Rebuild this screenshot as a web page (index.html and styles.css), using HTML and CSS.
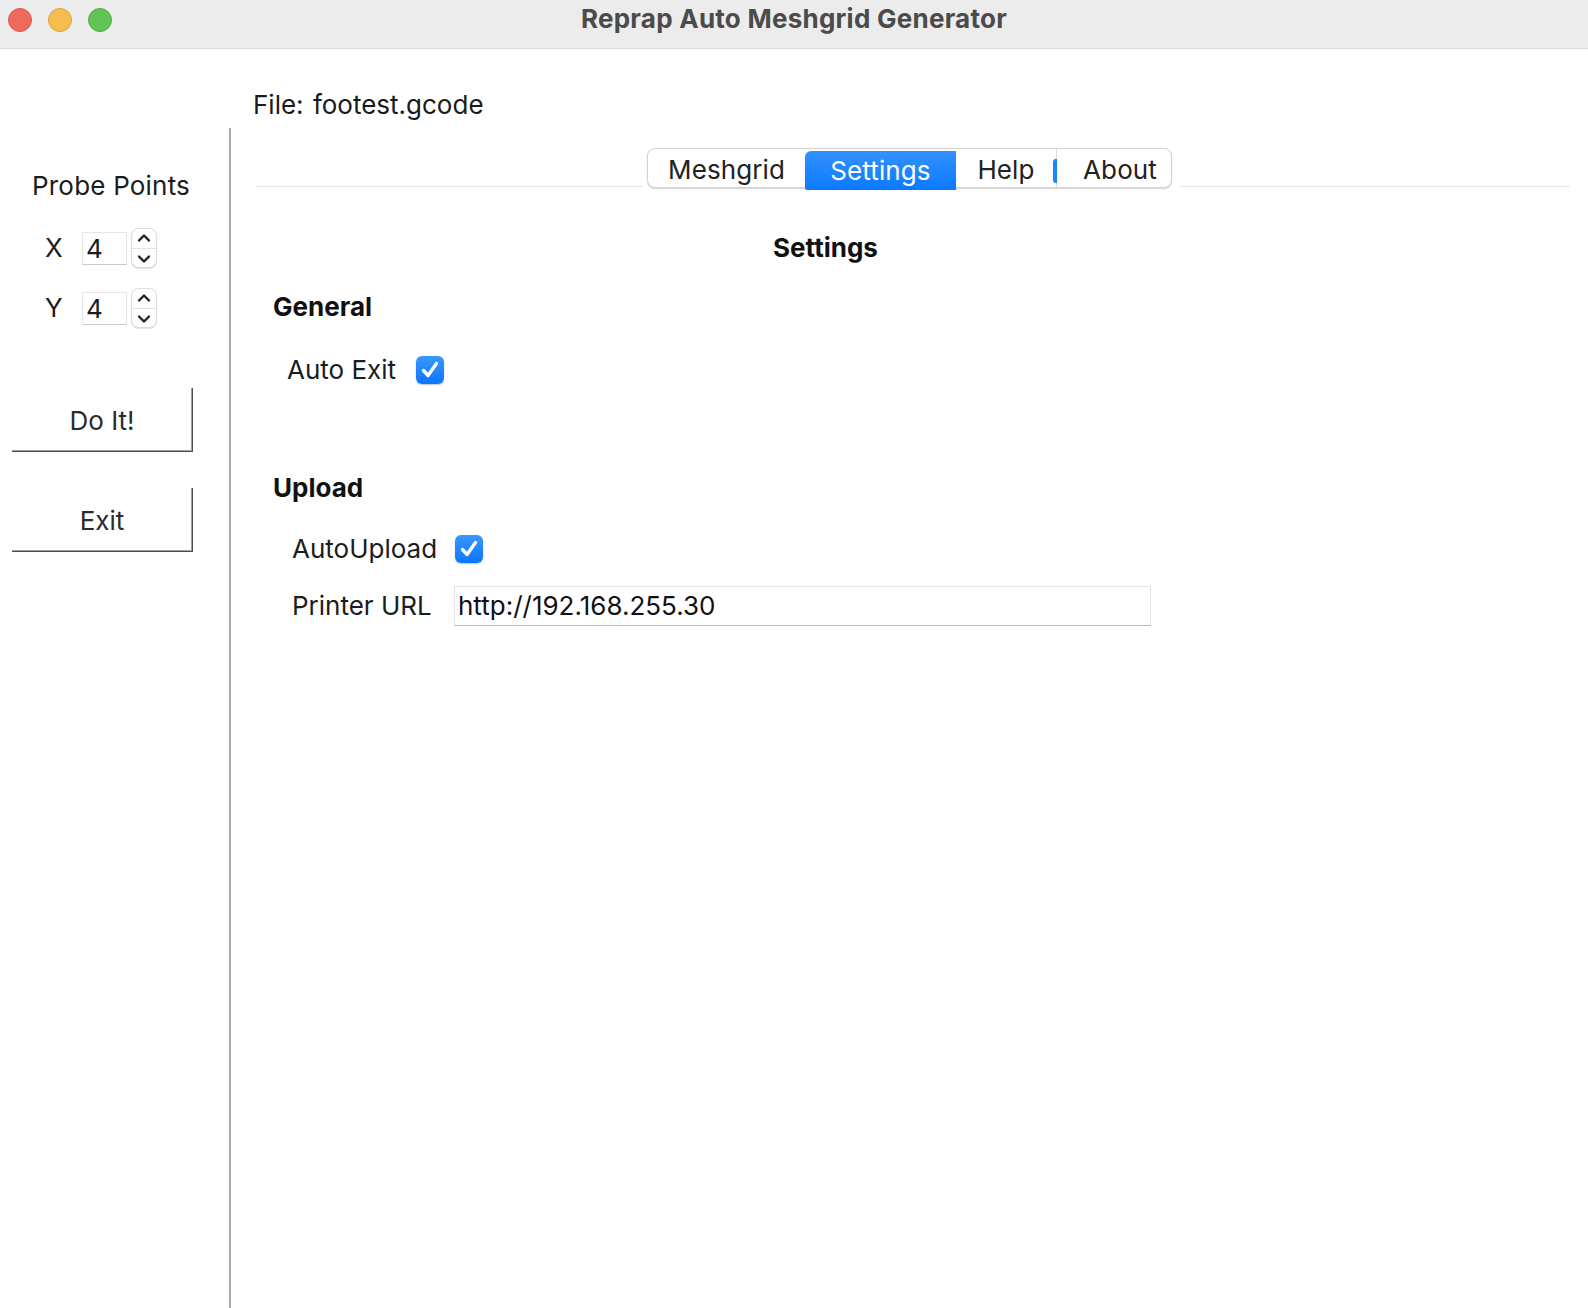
FILE: index.html
```html
<!DOCTYPE html>
<html lang="en">
<head>
<meta charset="utf-8">
<title>Reprap Auto Meshgrid Generator</title>
<link rel="stylesheet" href="styles.css">
</head>
<body>
<div class="window">
  <header class="titlebar">
    <div class="lights">
      <span class="light red"></span>
      <span class="light yellow"></span>
      <span class="light green"></span>
    </div>
    <div class="title">Reprap Auto Meshgrid Generator</div>
    <div></div>
  </header>

  <div class="layout">
    <div class="file-label">File: footest.gcode</div>

    <aside class="side">
      <div class="side-title">Probe Points</div>
      <div class="spin-row">
        <span class="axis">X</span>
        <div class="spin-entry">4</div>
        <div class="spinner">
          <svg class="chev" width="16" height="12" viewBox="0 0 16 12"><path d="M3 8.5 L8 3.5 L13 8.5"/></svg>
          <span class="spin-div"></span>
          <svg class="chev" width="16" height="12" viewBox="0 0 16 12"><path d="M3 3.5 L8 8.5 L13 3.5"/></svg>
        </div>
      </div>
      <div class="spin-row second">
        <span class="axis">Y</span>
        <div class="spin-entry">4</div>
        <div class="spinner">
          <svg class="chev" width="16" height="12" viewBox="0 0 16 12"><path d="M3 8.5 L8 3.5 L13 8.5"/></svg>
          <span class="spin-div"></span>
          <svg class="chev" width="16" height="12" viewBox="0 0 16 12"><path d="M3 3.5 L8 8.5 L13 3.5"/></svg>
        </div>
      </div>
      <button class="btn do-it">Do It!</button>
      <button class="btn exit">Exit</button>
    </aside>

    <section class="content">
      <div class="tabbar">
        <span class="tabline left"></span>
        <div class="tabs">
          <div class="tab t-mesh">Meshgrid</div>
          <div class="tab t-settings active">Settings</div>
          <div class="tab t-help">Help</div>
          <div class="tab t-about">About</div>
        </div>
        <span class="tabline right"></span>
      </div>

      <div class="page">
        <h1 class="page-title">Settings</h1>

        <h2 class="section">General</h2>
        <div class="check-row">
          <span class="check-label">Auto Exit</span>
          <span class="checkbox"><svg width="28" height="28" viewBox="0 0 28 28"><path d="M7.5 14.5 L12 19.5 L20.5 7.5"/></svg></span>
        </div>

        <h2 class="section upload">Upload</h2>
        <div class="form-grid">
          <span class="form-label">AutoUpload</span>
          <span class="checkbox"><svg width="28" height="28" viewBox="0 0 28 28"><path d="M7.5 14.5 L12 19.5 L20.5 7.5"/></svg></span>
          <span class="form-label">Printer URL</span>
          <div class="text-entry">http://192.168.255.30</div>
        </div>
      </div>
    </section>
  </div>
</div>
</body>
</html>
```

FILE: styles.css
```css
* { box-sizing: border-box; }

html, body {
  margin: 0;
  padding: 0;
  background: #ffffff;
}

body {
  width: 1588px;
  height: 1308px;
  overflow: hidden;
  font-family: "Inter", "Helvetica Neue", "Liberation Sans", sans-serif;
  font-size: 26px;
  line-height: 32px;
  color: #1c1c1c;
}

.window {
  display: flex;
  flex-direction: column;
  height: 1308px;
}

/* ---------- title bar ---------- */
.titlebar {
  height: 49px;
  flex: none;
  background: #ececec;
  border-bottom: 1px solid #d9d9d9;
  display: grid;
  grid-template-columns: 1fr auto 1fr;
  align-items: start;
}

.lights {
  display: flex;
  gap: 16px;
  padding: 8px 0 0 8px;
}

.light {
  width: 24px;
  height: 24px;
  border-radius: 50%;
  display: block;
}
.light.red { background: #ee6a5f; border: 1px solid #d85a4f; }
.light.yellow { background: #f5bf4f; border: 1px solid #dca53e; }
.light.green { background: #61c555; border: 1px solid #50aa45; }

.title {
  padding-top: 3px;
  font-weight: 700;
  font-size: 26px;
  letter-spacing: 0.25px;
  color: #4b4b4b;
}

/* ---------- layout ---------- */
.layout {
  flex: 1;
  display: grid;
  grid-template-columns: 229px 1fr;
  grid-template-rows: 79px 1fr;
}

.file-label {
  grid-column: 2;
  grid-row: 1;
  padding: 40px 0 0 24px;
  color: #1a1a1a;
  word-spacing: 2px;
}

/* ---------- side ---------- */
.side {
  grid-column: 1;
  grid-row: 2;
  display: flex;
  flex-direction: column;
  align-items: flex-start;
  padding-top: 42px;
}

.side-title {
  padding-left: 32px;
  letter-spacing: 0.2px;
}

.spin-row {
  display: flex;
  align-items: center;
  height: 40px;
  margin-top: 26px;
  padding-left: 45px;
}
.spin-row.second { margin-top: 20px; }

.axis {
  width: 37px;
}

.spin-entry {
  width: 45px;
  height: 33px;
  border: 1px solid #e6e6e6;
  border-bottom-color: #c9c9c9;
  padding-left: 3px;
  line-height: 31px;
  background: #fff;
}

.spinner {
  margin-left: 4px;
  width: 26px;
  height: 40px;
  border: 1px solid #dcdcdc;
  border-radius: 8px;
  box-shadow: 0 1px 1px rgba(0, 0, 0, 0.12);
  display: flex;
  flex-direction: column;
  align-items: center;
  justify-content: space-between;
  padding: 3px 0 2px;
  background: #fff;
}

.spin-div {
  display: block;
  width: 24px;
  height: 1px;
  background: #e2e2e2;
}

.chev { display: block; }
.chev path {
  fill: none;
  stroke: #222;
  stroke-width: 2.4;
  stroke-linecap: round;
  stroke-linejoin: round;
}

.btn {
  font: inherit;
  color: #2b2b2b;
  background: #fff;
  margin-left: 12px;
  width: 181px;
  height: 64px;
  border: none;
  border-right: 1px solid #4e4e4e;
  border-bottom: 1px solid #4e4e4e;
  box-shadow: inset -1px -1px 0 #9e9e9e;
  padding: 3px 0 0;
  text-align: center;
}
.btn.do-it { margin-top: 60px; }
.btn.exit { margin-top: 36px; }

/* ---------- content ---------- */
.content {
  grid-column: 2;
  grid-row: 2;
  border-left: 2px solid #ababab;
  padding-top: 20px;
}

.tabbar {
  display: grid;
  grid-template-columns: 1fr auto 1fr;
  align-items: end;
  height: 40px;
}

.tabline {
  height: 1px;
  background: #e4e4e4;
  margin-bottom: 1px;
}
.tabline.left { margin-left: 25px; margin-right: 4px; }
.tabline.right { margin-left: 8px; margin-right: 18px; }

.tabs {
  display: flex;
  height: 40px;
  border: 1px solid #d3d3d3;
  border-radius: 8px;
  box-shadow: 0 1px 1.5px rgba(0, 0, 0, 0.18);
  background: #fff;
}

.tab {
  display: flex;
  align-items: center;
  justify-content: center;
  color: #222;
  letter-spacing: 0.1px;
  padding-top: 3px;
}
.t-mesh { width: 157px; }
.t-settings { width: 151px; }
.t-help { width: 101px; border-right: 1px solid #dedede; }
.t-about { width: 114px; padding-left: 12px; position: relative; }

.t-about::before {
  content: "";
  position: absolute;
  left: -4px;
  top: 10px;
  width: 4px;
  height: 24px;
  border-radius: 3px 0 0 3px;
  background: #1f83fd;
}

.tab.active {
  background: linear-gradient(#3392fe, #0b79fe);
  color: #fff;
  margin-top: 2px;
  margin-bottom: -3px;
  padding-top: 0;
  border-radius: 6px 0 0 2px;
}

.page {
  margin-left: 25px;
  width: 1139px;
  padding-left: 17px;
}

.page-title {
  margin: 44px 0 0;
  font-size: 26px;
  font-weight: 700;
  line-height: 32px;
  text-align: center;
  padding-right: 17px;
  color: #111;
}

.section {
  margin: 27px 0 0;
  font-size: 26px;
  font-weight: 700;
  line-height: 32px;
  color: #111;
}
.section.upload { margin-top: 86px; }

.check-row {
  display: flex;
  align-items: center;
  margin-top: 31px;
  padding-left: 14px;
  height: 32px;
}

.check-label { width: 129px; }

.checkbox {
  width: 28px;
  height: 28px;
  border-radius: 6px;
  background: linear-gradient(#3b96ff, #0a77fd);
  box-shadow: 0 1px 1.5px rgba(0, 0, 0, 0.25);
  display: block;
}
.checkbox svg { display: block; }
.checkbox path {
  fill: none;
  stroke: #fff;
  stroke-width: 3.4;
  stroke-linecap: round;
  stroke-linejoin: round;
}

.form-grid {
  display: grid;
  grid-template-columns: 162px 697px;
  grid-template-rows: 32px 40px;
  row-gap: 21px;
  align-items: center;
  margin-top: 29px;
  padding-left: 19px;
}

.form-grid .checkbox { margin-left: 1px; }

.text-entry {
  height: 40px;
  border: 1px solid #e3e3e3;
  border-bottom-color: #b9b9b9;
  padding-left: 3px;
  line-height: 38px;
  color: #111;
  background: #fff;
}
```
